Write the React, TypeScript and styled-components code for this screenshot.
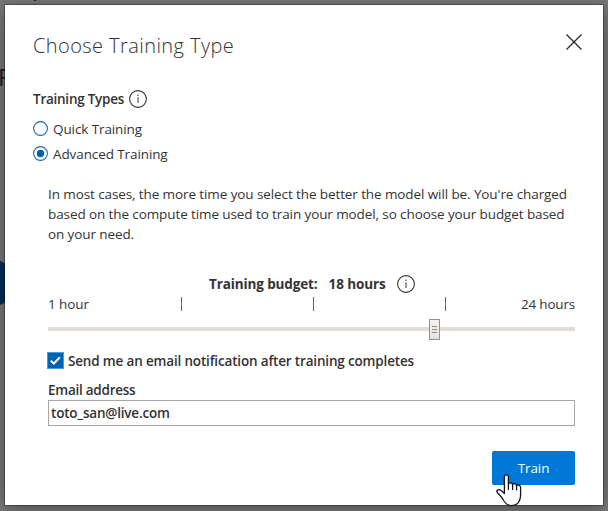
import React from 'react';
import styled, { createGlobalStyle } from 'styled-components';

const GlobalStyle = createGlobalStyle`
  * { box-sizing: border-box; }
  body { margin: 0; overflow: hidden; }
`;

const Backdrop = styled.main`
  position: relative;
  width: 608px;
  height: 511px;
  padding: 5px;
  overflow: hidden;
  background: #797979;
  color: #333;
  font: 400 13.5px/20px "Open Sans", "Noto Sans", sans-serif;
`;

const PageLetter = styled.span`
  position: absolute;
  left: -2px;
  top: 62px;
  font-size: 24px;
  line-height: 30px;
  color: #1c1c1c;
`;

const PageMark = styled.span`
  position: absolute;
  left: 34px;
  top: 0;
  width: 2px;
  height: 1px;
  background: #222;
`;

const PageDisc = styled.span`
  position: absolute;
  left: -30px;
  top: 260px;
  width: 46px;
  height: 46px;
  border-radius: 50%;
  background: #002f57;
`;

const Dialog = styled.section`
  position: relative;
  width: 598px;
  height: 500px;
  padding: 24px 28px 0;
  background: #fff;
  box-shadow: 0 0 0 1px rgba(0, 0, 0, 0.3), 0 3px 18px rgba(0, 0, 0, 0.4);
`;

const Header = styled.header`
  display: flex;
  justify-content: space-between;
  height: 54px;
`;

const Title = styled.h1`
  margin: 0;
  font-size: 20px;
  font-weight: 350;
  line-height: 34px;
  letter-spacing: 0.42px;
`;

const CloseButton = styled.button`
  width: 18px;
  height: 18px;
  margin: 4px -8px 0 0;
  padding: 0;
  border: 0;
  background: none;
  svg { display: block; }
`;

const Text = styled.span<{ $weight?: number; $track?: number }>`
  font-weight: ${p => p.$weight ?? 400};
  letter-spacing: ${p => p.$track ?? -0.1}px;
  white-space: nowrap;
`;

const FieldHeading = styled.div`
  display: flex;
  align-items: center;
  gap: 5px;
  height: 32px;
`;

const Radio = styled.label`
  display: flex;
  align-items: center;
  gap: 5px;
  height: 25px;
`;

const Options = styled.div`
  padding-top: 1px;
`;

const Body = styled.div`
  padding: 18px 0 0 15px;
  width: 542px;
`;

const Explanation = styled.p`
  display: flex;
  flex-direction: column;
  margin: 0;
  height: 60px;
`;

const Budget = styled.div`
  display: flex;
  align-items: center;
  height: 20px;
  margin: 30px 0 0 161px;
`;

const BudgetValue = styled.span`
  display: flex;
  align-items: center;
  gap: 11px;
  margin-left: 11px;
`;

const Scale = styled.div`
  display: flex;
  justify-content: space-between;
  align-items: center;
  height: 20px;
`;

const Ticks = styled.div`
  display: flex;
  justify-content: space-between;
  width: 265px;
  margin-left: 18px;
`;

const Tick = styled.i`
  width: 1px;
  height: 14px;
  background: #745f55;
`;

const Slider = styled.div`
  position: relative;
  height: 4px;
  margin-top: 13px;
  background: #e1ddd5;
`;

const Thumb = styled.span`
  position: absolute;
  left: 381px;
  top: -8px;
  display: flex;
  flex-direction: column;
  justify-content: center;
  align-items: center;
  gap: 2px;
  width: 11px;
  height: 21px;
  border: 1px solid #999187;
  background: linear-gradient(#f4f2ef, #e4e0dc);
`;

const Grip = styled.i`
  width: 5px;
  height: 1px;
  background: #8e8983;
`;

const CheckRow = styled.label`
  display: flex;
  align-items: center;
  gap: 4px;
  height: 17px;
  margin: 21px 0 0 -1px;
`;

const Checkbox = styled.span`
  display: grid;
  place-items: center;
  width: 17px;
  height: 17px;
  background: #0063b1;
  border: 1px solid #429ce3;
`;

const EmailField = styled.label`
  display: flex;
  flex-direction: column;
  margin-top: 11px;
`;

const EmailInput = styled.span`
  display: flex;
  align-items: center;
  width: 527px;
  height: 26px;
  padding: 0 0 0 2px;
  border: 1px solid #a6a6a6;
`;

const Footer = styled.footer`
  display: flex;
  justify-content: flex-end;
  width: 542px;
  padding-top: 25px;
`;

const TrainButton = styled.button`
  width: 83px;
  height: 34px;
  padding: 0;
  border: 0;
  border-radius: 2px;
  background: #0078d7;
  color: #fff;
  font: inherit;
`;

const Pointer = styled.svg`
  position: absolute;
  left: 495px;
  top: 473px;
`;

const InfoIcon = () => (
  <svg width="18" height="18" viewBox="0 0 18 18" fill="none">
    <circle cx="9" cy="9" r="8.4" stroke="#333" strokeWidth="1.1" />
    <path d="M9 7.3V13" stroke="#4c565b" strokeWidth="1.2" />
    <path d="M9 4.6V6" stroke="#4c565b" strokeWidth="1.3" />
  </svg>
);

const RadioIcon = ({ checked = false }: { checked?: boolean }) => (
  <svg width="15" height="15" viewBox="0 0 15 15">
    <circle cx="7.5" cy="7.5" r="6.9" fill="#fff" stroke="#1767ae" strokeWidth="1.1" />
    {checked && <circle cx="7.5" cy="7.5" r="3.7" fill="#0063b1" />}
  </svg>
);

export default function App() {
  return (
    <>
      <GlobalStyle />
      <Backdrop>
        <PageLetter>F</PageLetter>
        <PageMark />
        <PageDisc />
        <Dialog role="dialog" aria-label="Choose Training Type">
          <Header>
            <Title>Choose Training Type</Title>
            <CloseButton aria-label="Close">
              <svg width="18" height="18" viewBox="0 0 18 18">
                <path d="M1.5 1.5 16.5 16.5M16.5 1.5 1.5 16.5" stroke="#262222" strokeWidth="1.2" />
              </svg>
            </CloseButton>
          </Header>
          <FieldHeading>
            <Text $weight={600} $track={-0.25}>Training Types</Text>
            <InfoIcon />
          </FieldHeading>
          <Options>
            <Radio><RadioIcon /><Text>Quick Training</Text></Radio>
            <Radio><RadioIcon checked /><Text>Advanced Training</Text></Radio>
          </Options>
          <Body>
            <Explanation>
              <Text>In most cases, the more time you select the better the model will be. You're charged</Text>
              <Text>based on the compute time used to train your model, so choose your budget based</Text>
              <Text>on your need.</Text>
            </Explanation>
            <Budget>
              <Text $weight={700} $track={-0.12}>Training budget:</Text>
              <BudgetValue>
                <Text $weight={700} $track={-0.1}>18 hours</Text>
                <InfoIcon />
              </BudgetValue>
            </Budget>
            <Scale>
              <Text>1 hour</Text>
              <Ticks><Tick /><Tick /><Tick /></Ticks>
              <Text $track={-0.2}>24 hours</Text>
            </Scale>
            <Slider>
              <Thumb><Grip /><Grip /><Grip /></Thumb>
            </Slider>
            <CheckRow>
              <Checkbox>
                <svg width="13" height="13" viewBox="0 0 13 13" fill="none">
                  <path d="m1.8 6.6 3 3 6-6.4" stroke="#fff" strokeWidth="2" />
                </svg>
              </Checkbox>
              <Text $weight={600} $track={-0.17}>Send me an email notification after training completes</Text>
            </CheckRow>
            <EmailField>
              <Text $weight={600} $track={-0.25}>Email address</Text>
              <EmailInput><Text $weight={600} $track={-0.2}>toto_san@live.com</Text></EmailInput>
            </EmailField>
          </Body>
          <Footer>
            <TrainButton><Text>Train</Text></TrainButton>
          </Footer>
        </Dialog>
        <Pointer width="28" height="34" viewBox="0 0 28 34">
          <path d="M9.4 20.5V3.8Q9.4 1.8 11.4 1.8T13.4 3.8V11Q14 9.8 15.5 9.8T17.6 11.5Q18.3 10.6 19.6 10.7T21.6 12.6Q22.5 11.8 23.8 12.1T25.6 14.2V21.5Q25.6 27.5 22.5 30.5Q20 32.7 16.5 32.7Q12 32.5 9.3 28.5Q7.3 24.8 4 21.3Q1 18.5 2.2 17.3Q4 15.9 6.5 17.8Z" fill="#fff" stroke="#111520" strokeWidth="1.3" strokeLinejoin="round" />
          <path d="M13.4 11V17M17.6 11.5V17M21.6 12.6V17.5" stroke="#111520" strokeWidth="1.2" />
        </Pointer>
      </Backdrop>
    </>
  );
}
